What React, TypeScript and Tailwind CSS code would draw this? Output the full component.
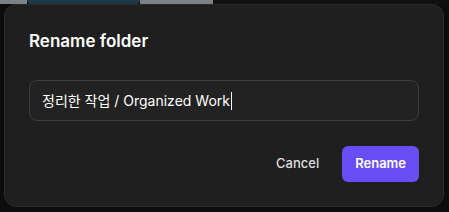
import React from 'react';

const App = () => {
    return (
        <div className="h-[212px] w-[449px] bg-[#0c0c0c] overflow-hidden" style={{ fontFamily: 'Inter, "Noto Sans CJK KR", sans-serif' }}>
            {/* dimmed page behind the dialog */}
            <div className="flex h-[4px]">
                <div className="w-[27px] bg-[#7b8184]" />
                <div className="w-[113px] bg-[#1e3a48] rounded-b-full" />
                <div className="w-[73px] bg-[#7b8184]" />
                <div className="flex-1 bg-[#101010]" />
            </div>
            <div className="mx-[4px] w-[440px] rounded-xl border border-[#2b2b2b] bg-[#1f1f1f] p-6">
                <h2 className="text-[17px] font-semibold leading-6 text-white">Rename folder</h2>
                <div className="mt-[27px] flex h-[41px] items-center rounded-lg border border-[#3d3d3d] bg-[#222222] px-3">
                    <span className="text-sm text-white">정리한 작업 / Organized Work</span>
                    <span className="ml-px h-[18px] w-px bg-white" />
                </div>
                <div className="mt-[25px] flex items-center justify-end gap-[7px]">
                    <button className="h-9 rounded-md px-4 text-[13px] font-medium text-[#dedede]">Cancel</button>
                    <button className="h-9 rounded-md bg-[#6a4ef5] px-[13px] text-[13px] font-semibold text-white">Rename</button>
                </div>
            </div>
        </div>
    );
};

export default App;
